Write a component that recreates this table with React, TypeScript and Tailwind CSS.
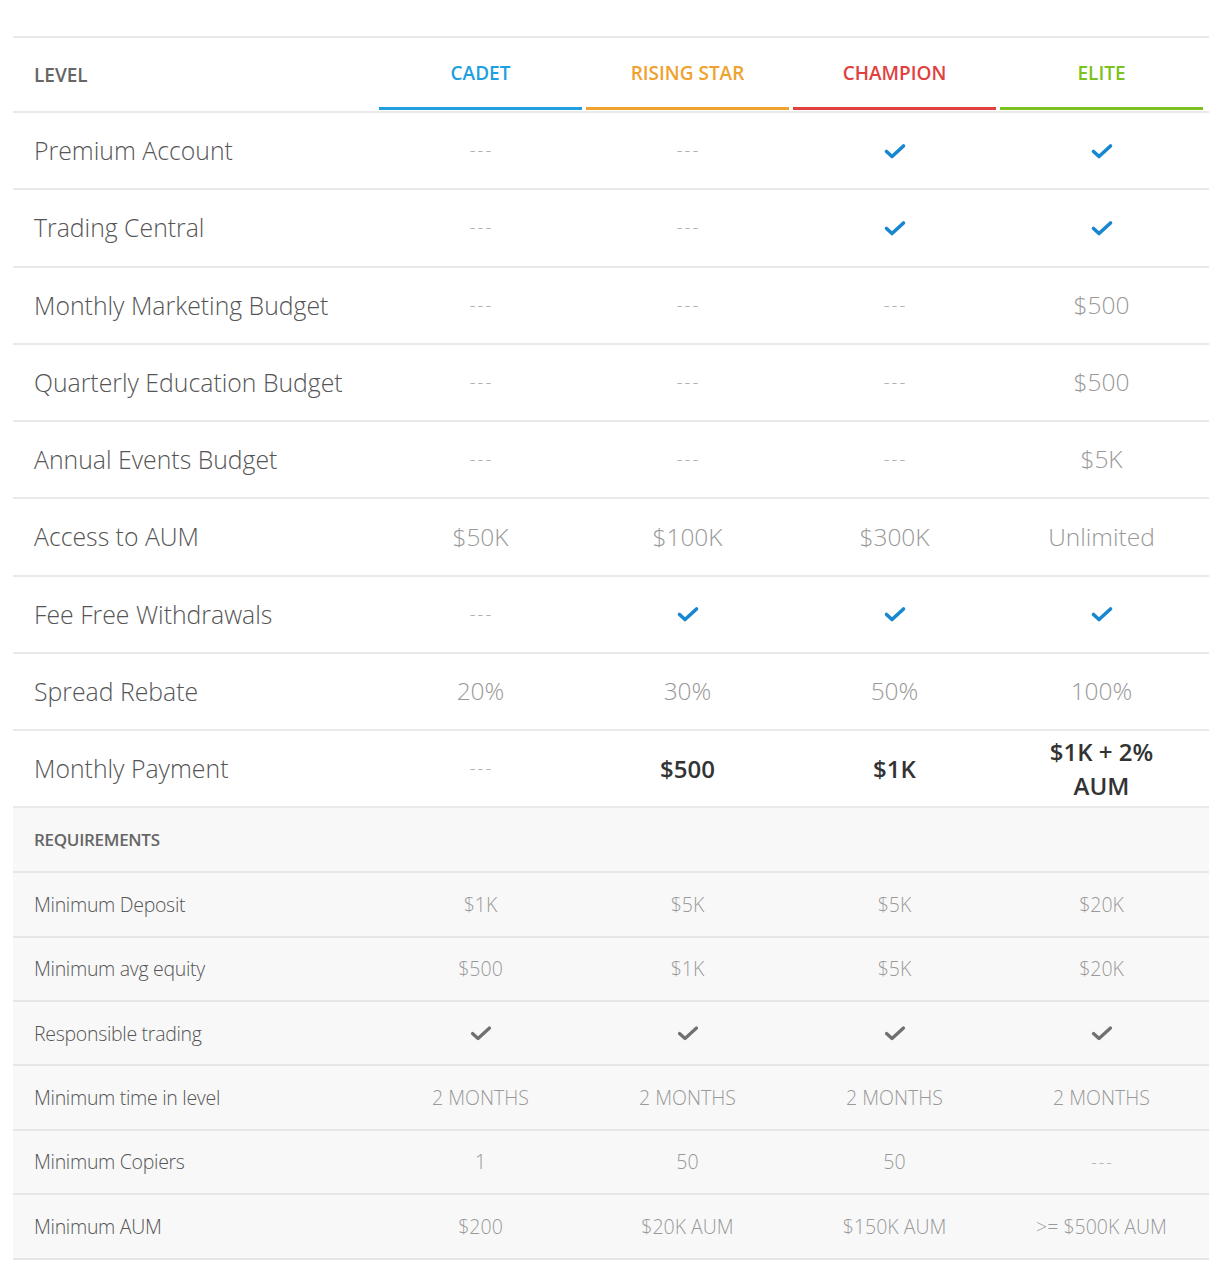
import React from 'react';

type Cell = string | { check: true } | { bold: string };

interface Row {
  label: string;
  values: Cell[];
}

const CHECK: Cell = { check: true };

const levels = [
  { name: 'CADET', text: 'text-[#1ea0e0]', bar: 'bg-[#1ea0e0]' },
  { name: 'RISING STAR', text: 'text-[#f0a22e]', bar: 'bg-[#f0a22e]' },
  { name: 'CHAMPION', text: 'text-[#e0413e]', bar: 'bg-[#e0413e]' },
  { name: 'ELITE', text: 'text-[#7cc21f]', bar: 'bg-[#7cc21f]' },
];

const benefits: Row[] = [
  { label: 'Premium Account', values: ['---', '---', CHECK, CHECK] },
  { label: 'Trading Central', values: ['---', '---', CHECK, CHECK] },
  { label: 'Monthly Marketing Budget', values: ['---', '---', '---', '$500'] },
  { label: 'Quarterly Education Budget', values: ['---', '---', '---', '$500'] },
  { label: 'Annual Events Budget', values: ['---', '---', '---', '$5K'] },
  { label: 'Access to AUM', values: ['$50K', '$100K', '$300K', 'Unlimited'] },
  { label: 'Fee Free Withdrawals', values: ['---', CHECK, CHECK, CHECK] },
  { label: 'Spread Rebate', values: ['20%', '30%', '50%', '100%'] },
  { label: 'Monthly Payment', values: ['---', { bold: '$500' }, { bold: '$1K' }, { bold: '$1K + 2% AUM' }] },
];

const requirements: Row[] = [
  { label: 'Minimum Deposit', values: ['$1K', '$5K', '$5K', '$20K'] },
  { label: 'Minimum avg equity', values: ['$500', '$1K', '$5K', '$20K'] },
  { label: 'Responsible trading', values: [CHECK, CHECK, CHECK, CHECK] },
  { label: 'Minimum time in level', values: ['2 MONTHS', '2 MONTHS', '2 MONTHS', '2 MONTHS'] },
  { label: 'Minimum Copiers', values: ['1', '50', '50', '---'] },
  { label: 'Minimum AUM', values: ['$200', '$20K AUM', '$150K AUM', '>= $500K AUM'] },
];

function Check({ gray }: { gray?: boolean }) {
  return (
    <svg
      width="24"
      height="18"
      viewBox="0 0 24 18"
      fill="none"
      stroke={gray ? '#707070' : '#1787d0'}
      strokeWidth={gray ? 3.2 : 3.6}
      strokeLinecap="round"
      strokeLinejoin="round"
      className="inline-block"
    >
      <path d="M3.5 9.5l5.5 5L20.5 4" />
    </svg>
  );
}

function ValueCell({ value, small }: { value: Cell; small?: boolean }) {
  if (typeof value === 'object' && 'check' in value) {
    return <Check gray={small} />;
  }
  if (typeof value === 'object' && 'bold' in value) {
    return (
      <span className="mx-auto block max-w-[130px] text-[24px] font-semibold leading-[34px] text-[#333]">
        {value.bold}
      </span>
    );
  }
  if (value === '---') {
    return (
      <span className={`${small ? 'text-[17px]' : 'text-[18px]'} pl-[2px] font-light tracking-[2px] text-[#aaa]`}>
        ---
      </span>
    );
  }
  return (
    <span className={small ? 'text-[19.5px] font-light text-[#999]' : 'text-[24.5px] font-light text-[#999]'}>
      {value}
    </span>
  );
}

export default function App() {
  return (
    <div className="min-h-[1280px] bg-white px-[13px] pt-[36px] font-['Open_Sans',sans-serif]">
      <div className="w-[1196px]">
        {/* header */}
        <div className="flex h-[77px] border-y-2 border-[#e9e9e9]">
          <div className="flex w-[364px] items-center pl-[21px] pt-[1px] text-[19px] font-semibold text-[#666]">
            LEVEL
          </div>
          {levels.map((l) => (
            <div key={l.name} className="flex w-[207px] flex-col px-[2px]">
              <div className={`flex flex-1 items-center justify-center pt-[1px] text-[19px] font-semibold ${l.text}`}>
                {l.name}
              </div>
              <div className={`mb-[1px] h-[3px] ${l.bar}`} />
            </div>
          ))}
        </div>

        {/* benefits */}
        {benefits.map((row) => (
          <div key={row.label} className="flex h-[77.25px] border-b-2 border-[#e9e9e9]">
            <div className="flex w-[364px] items-center pl-[21px] text-[24.8px] font-light text-[#555]">
              {row.label}
            </div>
            {row.values.map((v, i) => (
              <div key={i} className="flex w-[207px] items-center justify-center text-center">
                <ValueCell value={v} />
              </div>
            ))}
          </div>
        ))}

        {/* requirements */}
        <div className="bg-[#f8f8f8]">
          <div className="flex h-[65px] items-center border-b-2 border-[#e6e6e6] pl-[21px] text-[17px] font-semibold tracking-[-0.3px] text-[#666]">
            REQUIREMENTS
          </div>
          {requirements.map((row) => (
            <div key={row.label} className="flex h-[64.4px] border-b-2 border-[#e6e6e6]">
              <div className="flex w-[364px] items-center pl-[21px] text-[19.5px] font-light tracking-[-0.3px] text-[#555]">
                {row.label}
              </div>
              {row.values.map((v, i) => (
                <div key={i} className="flex w-[207px] items-center justify-center text-center">
                  <ValueCell value={v} small />
                </div>
              ))}
            </div>
          ))}
        </div>
      </div>
    </div>
  );
}
